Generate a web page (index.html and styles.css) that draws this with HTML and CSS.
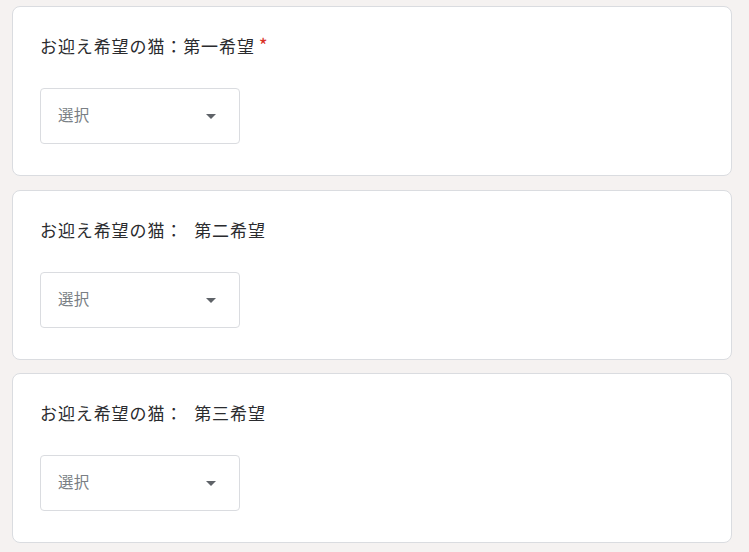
FILE: index.html
```html
<!DOCTYPE html>
<html lang="ja">
<head>
<meta charset="utf-8">
<link rel="stylesheet" href="styles.css">
</head>
<body>
<div class="list">
  <div class="card">
    <div class="title">お迎え希望の猫：第一希望<span class="req">*</span></div>
    <div class="select"><span class="placeholder">選択</span><span class="arrow"></span></div>
  </div>
  <div class="card">
    <div class="title">お迎え希望の猫：<span class="gap"></span>第二希望</div>
    <div class="select"><span class="placeholder">選択</span><span class="arrow"></span></div>
  </div>
  <div class="card">
    <div class="title">お迎え希望の猫：<span class="gap"></span>第三希望</div>
    <div class="select"><span class="placeholder">選択</span><span class="arrow"></span></div>
  </div>
</div>
</body>
</html>
```
FILE: styles.css
```css
html, body {
  margin: 0;
  padding: 0;
  background: #f5f2f1;
}
body {
  font-family: "Noto Sans CJK JP", "Noto Sans", sans-serif;
}
.list {
  display: flex;
  flex-direction: column;
  gap: 13.5px;
  padding: 6px 0 0 12px;
  width: 720px;
}
.card {
  box-sizing: border-box;
  width: 720px;
  height: 170px;
  background: #fff;
  border: 1px solid #dadce0;
  border-radius: 8px;
  padding: 27px 27px 0 27px;
}
.title {
  font-size: 17px;
  letter-spacing: 0.9px;
  line-height: 24px;
  color: #2a2b2e;
  margin-bottom: 30px;
}
.gap {
  display: inline-block;
  width: 11px;
}
.req {
  color: #d93025;
  margin-left: 4px;
  font-size: 19px;
  line-height: 1;
}
.select {
  box-sizing: border-box;
  width: 200px;
  height: 56px;
  border: 1px solid #dadce0;
  border-radius: 4px;
  display: flex;
  align-items: center;
  justify-content: space-between;
  padding: 0 23px 0 17px;
}
.placeholder {
  font-size: 15.5px;
  letter-spacing: 0.3px;
  color: #7a7f85;
  margin-bottom: 4px;
}
.arrow {
  width: 0;
  height: 0;
  border-left: 5px solid transparent;
  border-right: 5px solid transparent;
  border-top: 5px solid #5f6368;
  margin-top: 1px;
}
```
